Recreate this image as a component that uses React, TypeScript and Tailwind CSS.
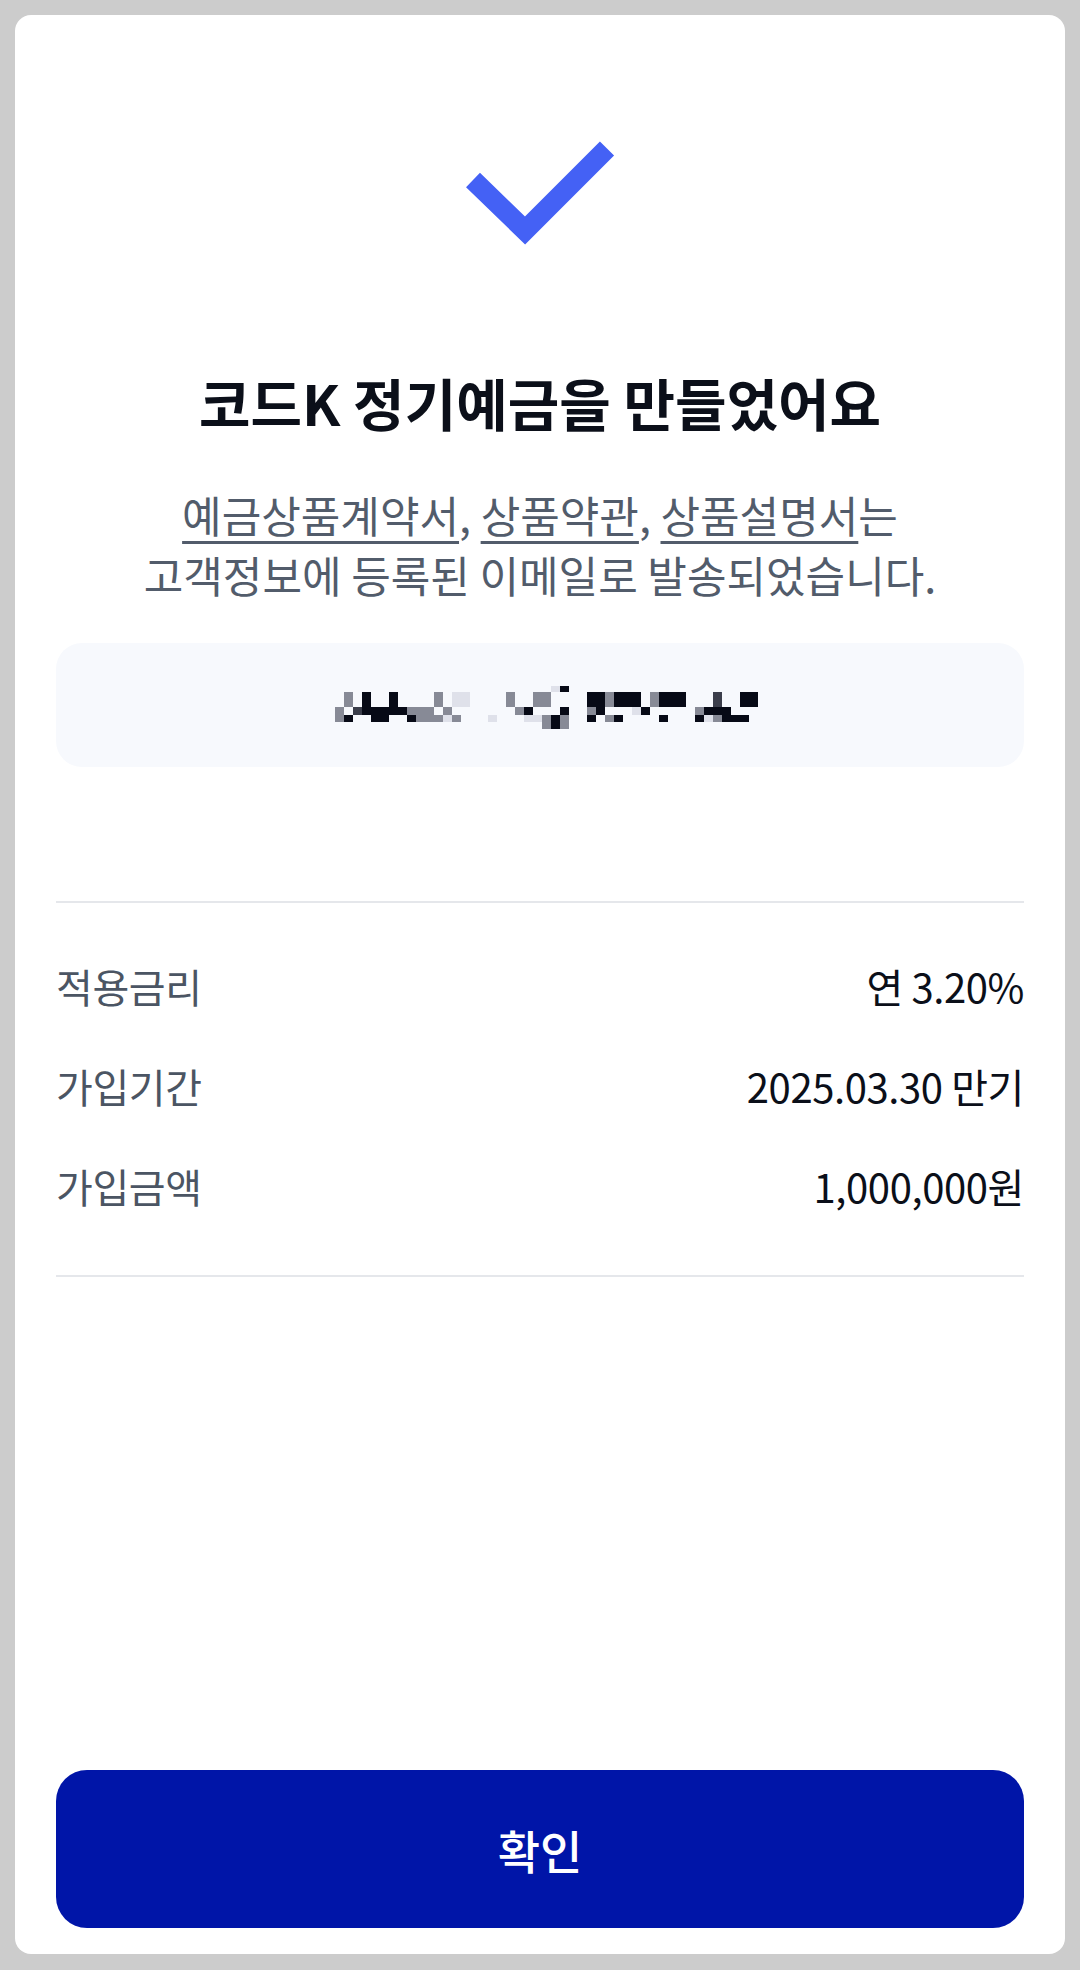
import React from "react";

// mosaic rows for the masked email (each char = one 9px block)
// ' ' none, '.' light, ':' mid, '+' dark-gray, '#' black
const MOSAIC: { y: number; h: number; cells: string }[] = [
  { y: 0, h: 6, cells: "                        .#                     " },
  { y: 6, h: 15, cells: " : #  #    : ..    :  ::    ##:### :###   +  ##:" },
  { y: 21, h: 8, cells: ": +#####::: :       :#   #  :#   .#     :###   " },
  { y: 29, h: 7, cells: ":#  ##  #:::.:   .   ..:#:  # :#    #   #.:###  " },
  { y: 36, h: 7, cells: "                       :#:                     " },
];

const SHADES: Record<string, string> = {
  ".": "#dfe1ea",
  ":": "#878a96",
  "+": "#3b3e4b",
  "#": "#070a16",
};

function MaskedEmail() {
  return (
    <svg width="423" height="43" viewBox="0 0 423 43" className="block">
      {MOSAIC.map((row, ri) =>
        row.cells.split("").map((c, ci) =>
          SHADES[c] ? (
            <rect
              key={`${ri}-${ci}`}
              x={ci * 9}
              y={row.y}
              width="9"
              height={row.h}
              fill={SHADES[c]}
            />
          ) : null
        )
      )}
    </svg>
  );
}

function InfoRow({ label, value }: { label: string; value: string }) {
  return (
    <div className="flex h-[100px] items-center justify-between">
      <span className="text-[40px] tracking-[-0.01em] text-[#4b5563]">{label}</span>
      <span className="text-[40px] tracking-[-0.01em] text-[#0b0f19]">{value}</span>
    </div>
  );
}

export default function App() {
  return (
    <div
      className="min-h-[1970px] w-[1080px] bg-[#cccccc] p-[15px]"
      style={{ fontFamily: '"Noto Sans CJK KR", "Noto Sans", sans-serif' }}
    >
      <div className="flex h-[1939px] flex-col rounded-[16px] bg-white px-[41px] pb-[26px]">
        {/* check */}
        <div className="mt-[120px] flex justify-center">
          <svg width="160" height="120" viewBox="0 0 160 120" fill="none">
            <path
              d="M13 45 L65 95.5 L147 13.5"
              stroke="#4461f5"
              strokeWidth="20"
              strokeLinejoin="miter"
              strokeLinecap="butt"
            />
          </svg>
        </div>

        <h1 className="mt-[113px] text-center text-[56px] font-bold leading-[68px] text-[#0b0f19]">
          코드K 정기예금을 만들었어요
        </h1>

        <p className="mt-[48px] text-center text-[43px] leading-[60px] text-[#525c6b]">
          <span className="underline decoration-[3px] underline-offset-[8px]">예금상품계약서</span>,{" "}
          <span className="underline decoration-[3px] underline-offset-[8px]">상품약관</span>,{" "}
          <span className="underline decoration-[3px] underline-offset-[8px]">상품설명서</span>는
          <br />
          고객정보에 등록된 이메일로 발송되었습니다.
        </p>

        <div className="mt-[39px] flex h-[124px] items-center justify-center rounded-[26px] bg-[#f7f9fd]">
          <div className="ml-[12px] mt-[4px]">
            <MaskedEmail />
          </div>
        </div>

        <div className="mt-[134px] h-[2px] bg-[#e5e7eb]" />

        <div className="mt-[33px] flex flex-col">
          <InfoRow label="적용금리" value="연 3.20%" />
          <InfoRow label="가입기간" value="2025.03.30 만기" />
          <InfoRow label="가입금액" value="1,000,000원" />
        </div>

        <div className="mt-[39px] h-[2px] bg-[#e5e7eb]" />

        <button className="mt-auto flex h-[158px] w-full items-center justify-center rounded-[31px] bg-[#0015a8] text-[46px] font-medium text-white">
          확인
        </button>
      </div>
    </div>
  );
}
